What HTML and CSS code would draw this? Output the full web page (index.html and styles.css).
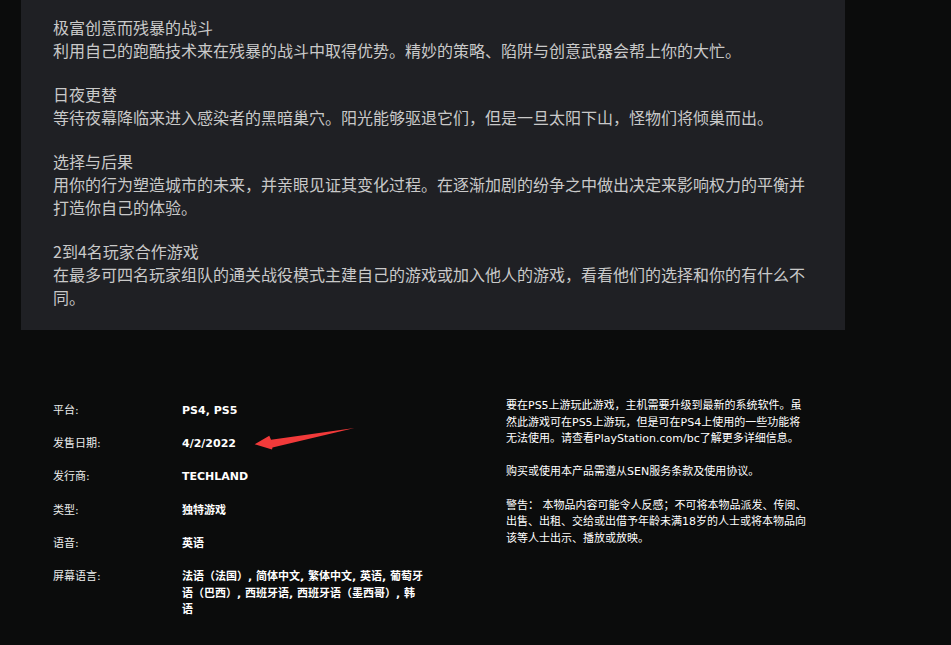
FILE: index.html
```html
<!DOCTYPE html>
<html lang="zh-CN">
<head>
<meta charset="utf-8">
<title>游戏详情</title>
<link rel="stylesheet" href="styles.css">
</head>
<body>
<section class="desc">
  <p class="para">极富创意而残暴的战斗<br>利用自己的跑酷技术来在残暴的战斗中取得优势。精妙的策略、陷阱与创意武器会帮上你的大忙。</p>
  <p class="para">日夜更替<br>等待夜幕降临来进入感染者的黑暗巢穴。阳光能够驱退它们，但是一旦太阳下山，怪物们将倾巢而出。</p>
  <p class="para">选择与后果<br>用你的行为塑造城市的未来，并亲眼见证其变化过程。在逐渐加剧的纷争之中做出决定来影响权力的平衡并打造你自己的体验。</p>
  <p class="para">2到4名玩家合作游戏<br>在最多可四名玩家组队的通关战役模式主建自己的游戏或加入他人的游戏，看看他们的选择和你的有什么不同。</p>
</section>

<section class="info">
  <dl class="meta">
    <div class="row"><dt>平台:</dt><dd>PS4, PS5</dd></div>
    <div class="row"><dt>发售日期:</dt><dd>4/2/2022</dd></div>
    <div class="row"><dt>发行商:</dt><dd>TECHLAND</dd></div>
    <div class="row"><dt>类型:</dt><dd>独特游戏</dd></div>
    <div class="row"><dt>语音:</dt><dd>英语</dd></div>
    <div class="row"><dt>屏幕语言:</dt><dd>法语（法国）, 简体中文, 繁体中文, 英语, 葡萄牙语（巴西）, 西班牙语, 西班牙语（墨西哥）, 韩语</dd></div>
  </dl>
  <div class="legal">
    <p>要在PS5上游玩此游戏，主机需要升级到最新的系统软件。虽然此游戏可在PS5上游玩，但是可在PS4上使用的一些功能将无法使用。请查看PlayStation.com/bc了解更多详细信息。</p>
    <p>购买或使用本产品需遵从SEN服务条款及使用协议。</p>
    <p>警告： 本物品内容可能令人反感；不可将本物品派发、传阅、出售、出租、交给或出借予年龄未满18岁的人士或将本物品向该等人士出示、播放或放映。</p>
  </div>
  <svg class="arrow" width="110" height="30" viewBox="250 425 110 30" aria-hidden="true">
    <polygon points="254.7,444.3 269.3,435.7 271,439.8 354.5,428 272.5,447.6 272,449.5" fill="#f23a3a"/>
  </svg>
</section>
</body>
</html>
```

FILE: styles.css
```css
html, body {
  margin: 0;
  padding: 0;
  background: #0b0c0c;
}

body {
  width: 951px;
  height: 645px;
  overflow: hidden;
  font-family: "Noto Sans", "Noto Sans CJK SC", sans-serif;
}

.desc {
  margin-left: 21px;
  width: 824px;
  box-sizing: border-box;
  padding: 16px 32px 21px 32px;
  background: #1f2024;
  color: #c9c9c9;
  font-family: "Noto Sans CJK SC", "Noto Sans", sans-serif;
  font-size: 16px;
  line-height: 23px;
}

.para {
  margin: 0 0 21px 0;
}

.para:last-child {
  margin-bottom: 0;
}

.info {
  position: relative;
  display: grid;
  grid-template-columns: 453px 302.5px;
  padding: 68px 0 0 53px;
  color: #ffffff;
  font-family: "DejaVu Sans", "Noto Sans CJK SC", sans-serif;
  font-size: 11px;
  line-height: 16.6px;
}

.meta {
  margin: 5px 0 0 0;
}

.row {
  display: grid;
  grid-template-columns: 129px 242px;
  margin-bottom: 16.6px;
}

.row dt {
  margin: 0;
  color: #ececec;
}

.row dd {
  margin: 0;
  font-weight: 700;
}

.legal p {
  margin: 0 0 16.6px 0;
}

.arrow {
  position: absolute;
  left: 250px;
  top: 95px;
}
```
